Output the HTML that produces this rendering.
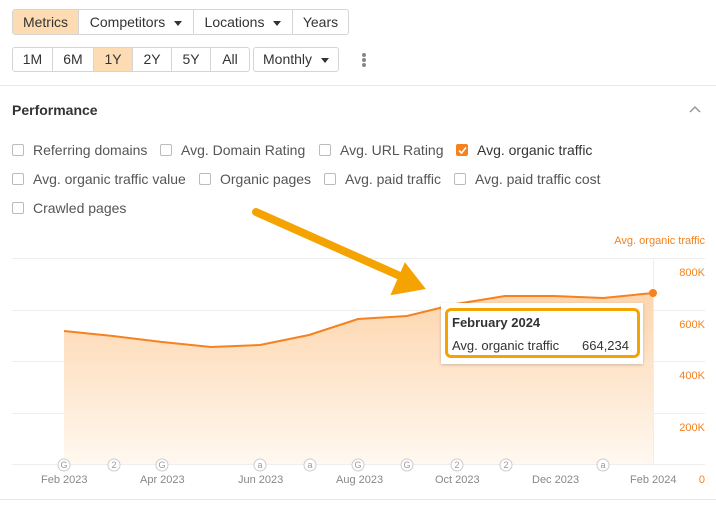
<!DOCTYPE html><html><head><style>
body{margin:0;width:716px;height:507px;background:#fff;font-family:"Liberation Sans",sans-serif;color:#333;position:relative;overflow:hidden}
.bg{position:absolute;display:flex;border:1px solid #d5d5d5;border-radius:3px;height:23px}
.bg div{padding:0 9px;font-size:14px;line-height:23px;border-left:1px solid #d5d5d5;color:#333}
.bg div:first-child{border-left:none}
.r1 div{padding:0;text-align:center;line-height:24px;white-space:nowrap}
.on{background:#fddcb3}
.car{display:inline-block;border-left:4px solid transparent;border-right:4px solid transparent;border-top:5px solid #333;margin-left:9px;vertical-align:middle}
.cb{position:absolute;font-size:14px;color:#555;display:flex;align-items:center}
.cb i{width:12px;height:12px;border:1px solid #bbb;border-radius:2px;margin-right:9px;display:inline-block;box-sizing:border-box}
.ax{position:absolute;font-size:11px;color:#888}
.yl{position:absolute;font-size:11px;color:#f5821f;right:11px}
</style></head><body>
<div class="bg r1" style="left:12px;top:9px;height:24px"><div class="on" style="width:65px">Metrics</div><div style="width:114px">Competitors<span class="car"></span></div><div style="width:98px">Locations<span class="car"></span></div><div style="width:55px">Years</div></div>
<div class="bg" style="left:12px;top:47px"><div style="width:21px;padding:0 9px 0 9px;text-align:center">1M</div><div style="width:22px;text-align:center">6M</div><div class="on" style="width:20px;text-align:center">1Y</div><div style="width:20px;text-align:center">2Y</div><div style="width:20px;text-align:center">5Y</div><div style="width:20px;text-align:center">All</div></div>
<div class="bg" style="left:253px;top:47px"><div>Monthly<span class="car"></span></div></div>
<div style="position:absolute;left:362px;top:53px;width:4px"><div style="width:4px;height:4px;border-radius:2px;background:#888;margin-bottom:1px"></div><div style="width:4px;height:4px;border-radius:2px;background:#888;margin-bottom:1px"></div><div style="width:4px;height:4px;border-radius:2px;background:#888"></div></div>
<div style="position:absolute;left:0;top:85px;width:716px;height:1px;background:#e8e8e8"></div>
<div style="position:absolute;left:12px;top:102px;font-size:14px;font-weight:bold;color:#333">Performance</div>
<svg style="position:absolute;left:689px;top:105px" width="12" height="8"><path d="M1 7L6 2L11 7" stroke="#999" stroke-width="1.5" fill="none"/></svg>
<div class="cb" style="left:12px;top:142px"><i></i>Referring domains</div>
<div class="cb" style="left:160px;top:142px"><i></i>Avg. Domain Rating</div>
<div class="cb" style="left:319px;top:142px"><i></i>Avg. URL Rating</div>
<div class="cb" style="left:456px;top:142px;color:#333"><i style="background:#f5821f;border-color:#f5821f;position:relative"><svg style="position:absolute;left:1px;top:1px" width="9" height="9"><path d="M1 4.5L3.5 7L8 1.5" stroke="#fff" stroke-width="1.6" fill="none"/></svg></i>Avg. organic traffic</div>
<div class="cb" style="left:12px;top:171px"><i></i>Avg. organic traffic value</div>
<div class="cb" style="left:199px;top:171px"><i></i>Organic pages</div>
<div class="cb" style="left:324px;top:171px"><i></i>Avg. paid traffic</div>
<div class="cb" style="left:454px;top:171px"><i></i>Avg. paid traffic cost</div>
<div class="cb" style="left:12px;top:200px"><i></i>Crawled pages</div>
<div class="yl" style="top:235px">Avg. organic traffic</div>
<svg style="position:absolute;left:0;top:0" width="716" height="507">
<defs><linearGradient id="g" x1="0" y1="0" x2="0" y2="1"><stop offset="0" stop-color="#fdd5ad"/><stop offset="1" stop-color="#fff8f0"/></linearGradient></defs>
<g stroke="#eee" stroke-width="1"><line x1="12" y1="258.5" x2="705" y2="258.5"/><line x1="12" y1="310.5" x2="705" y2="310.5"/><line x1="12" y1="361.5" x2="705" y2="361.5"/><line x1="12" y1="413.5" x2="705" y2="413.5"/><line x1="12" y1="464.5" x2="705" y2="464.5"/><line x1="653.5" y1="258" x2="653.5" y2="464"/></g>
<path d="M64 331L113 336L162 342L211 347L260 345L309 335L358 319L407 316L456 304L505 296L554 296L603 298L653 293L653 464L64 464Z" fill="url(#g)"/>
<path d="M64 331L113 336L162 342L211 347L260 345L309 335L358 319L407 316L456 304L505 296L554 296L603 298L653 293" fill="none" stroke="#f5821f" stroke-width="2"/>
<circle cx="653" cy="293" r="4" fill="#f5821f"/>
<line x1="256" y1="212" x2="400" y2="276" stroke="#f5a300" stroke-width="8" stroke-linecap="round"/>
<path d="M388 292L408 262L424 292Z" fill="#f5a300" transform="rotate(-10 408 280)"/>
<g fill="#fff" stroke="#ccc" font-size="8" text-anchor="middle" font-family="Liberation Sans">
<circle cx="64" cy="465" r="6"/><circle cx="114" cy="465" r="6"/><circle cx="162" cy="465" r="6"/><circle cx="260" cy="465" r="6"/><circle cx="310" cy="465" r="6"/><circle cx="358" cy="465" r="6"/><circle cx="407" cy="465" r="6"/><circle cx="457" cy="465" r="6"/><circle cx="506" cy="465" r="6"/><circle cx="603" cy="465" r="6"/></g>
<g fill="#999" font-size="9" text-anchor="middle" font-family="Liberation Sans">
<text x="64" y="468">G</text><text x="114" y="468">2</text><text x="162" y="468">G</text><text x="260" y="468">a</text><text x="310" y="468">a</text><text x="358" y="468">G</text><text x="407" y="468">G</text><text x="457" y="468">2</text><text x="506" y="468">2</text><text x="603" y="468">a</text></g>
</svg>
<div style="position:absolute;left:441px;top:303px;width:202px;height:61px;background:#fff;box-shadow:0 1px 3px rgba(0,0,0,.2)"></div>
<div style="position:absolute;left:445px;top:308px;width:189px;height:44px;border:3px solid #f5a300;border-radius:6px"></div>
<div style="position:absolute;left:452px;top:315px;font-size:13px;font-weight:bold;color:#333">February 2024</div>
<div style="position:absolute;left:452px;top:338px;font-size:13px;color:#333">Avg. organic traffic</div>
<div style="position:absolute;left:582px;top:338px;font-size:13px;color:#333">664,234</div>
<div class="yl" style="top:267px">800K</div><div class="yl" style="top:319px">600K</div><div class="yl" style="top:370px">400K</div><div class="yl" style="top:422px">200K</div><div class="yl" style="top:474px">0</div>
<div class="ax" style="left:41px;top:474px">Feb 2023</div><div class="ax" style="left:140px;top:474px">Apr 2023</div><div class="ax" style="left:238px;top:474px">Jun 2023</div><div class="ax" style="left:336px;top:474px">Aug 2023</div><div class="ax" style="left:435px;top:474px">Oct 2023</div><div class="ax" style="left:532px;top:474px">Dec 2023</div><div class="ax" style="left:630px;top:474px">Feb 2024</div>
<div style="position:absolute;left:0;top:499px;width:716px;height:1px;background:#e8e8e8"></div>
</body></html>
